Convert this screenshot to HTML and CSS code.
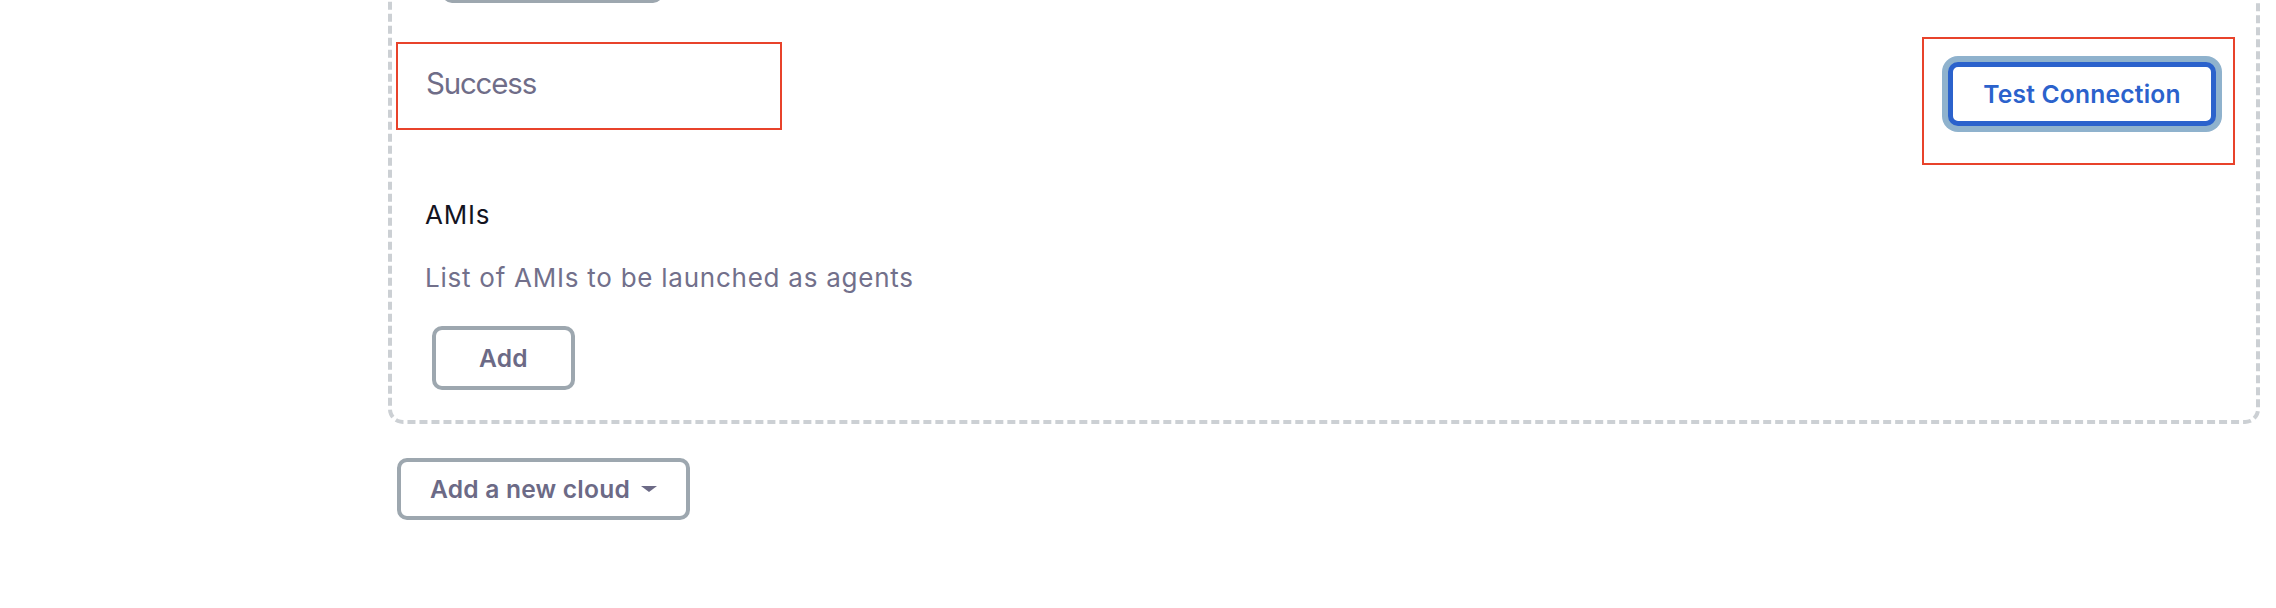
FILE: index.html
```html
<!DOCTYPE html>
<html lang="en">
<head>
<meta charset="utf-8">
<title>Clouds</title>
<link rel="stylesheet" href="styles.css">
</head>
<body>
<main class="page">
  <section class="cloud">
    <div class="prev-row"><button class="btn btn-prev" type="button" aria-label="Delete cloud"></button></div>
    <div class="validate-row">
      <div class="validation"><span class="validation-text">Success</span></div>
      <div class="validate-action"><button class="btn btn-focus" type="button">Test Connection</button></div>
    </div>
    <div class="field">
      <div class="label">AMIs</div>
      <div class="desc">List of AMIs to be launched as agents</div>
      <button class="btn btn-add" type="button">Add</button>
    </div>
  </section>
  <div class="actions">
    <button class="btn btn-menu" type="button">Add a new cloud <span class="caret"></span></button>
  </div>
</main>
</body>
</html>
```
FILE: styles.css
```css
html, body {
  margin: 0;
  padding: 0;
  background: #ffffff;
  overflow: hidden;
}
body {
  font-family: Inter, "Liberation Sans", sans-serif;
  font-size: 26px;
  letter-spacing: 0.75px;
  line-height: 36px;
  color: #14141f;
}
.page {
  width: 1872px;
  margin-left: 388px;
}
.cloud {
  box-sizing: border-box;
  width: 1872px;
  margin-top: -81px;
  border: 4px dashed #ccd0d4;
  border-radius: 15px;
  padding: 17px 21px 30px 4px;
}
.prev-row {
  display: flex;
  padding-left: 46px;
}
.btn {
  box-sizing: border-box;
  display: inline-flex;
  align-items: center;
  justify-content: center;
  height: 63px;
  padding: 0;
  background: #ffffff;
  border: 4px solid #9da7af;
  border-radius: 10px;
  font-family: Inter, "Liberation Sans", sans-serif;
  font-size: 24.6px;
  letter-spacing: 0.2px;
  font-weight: 600;
  white-space: nowrap;
  color: #6c6a86;
  cursor: pointer;
}
.btn-prev {
  width: 221px;
}
.validate-row {
  display: flex;
  justify-content: space-between;
  align-items: flex-start;
  margin-top: 34px;
}
.validation {
  box-sizing: border-box;
  width: 386px;
  height: 88px;
  margin-top: 5px;
  border: 2px solid #e8432b;
  display: flex;
  align-items: center;
  padding: 0 0 5px 28px;
}
.validation-text {
  font-size: 29.5px;
  letter-spacing: -1.2px;
  line-height: 1;
  color: #6f6d88;
}
.validate-action {
  box-sizing: border-box;
  width: 313px;
  height: 128px;
  border: 2px solid #e8432b;
  padding: 23px 17px 0 24px;
}
.btn-focus {
  width: 268px;
  height: 64px;
  border: 5px solid #2b62cc;
  color: #2b62cc;
  box-shadow: 0 0 0 6px #8fb2cd;
}
.field {
  padding-left: 29px;
  margin-top: 32px;
}
.label {
  font-weight: 400;
  color: #14141f;
}
.desc {
  margin-top: 27px;
  color: #72708b;
}
.btn-add {
  margin-top: 30px;
  margin-left: 7px;
  width: 143px;
  height: 64px;
}
.actions {
  padding-left: 9px;
  margin-top: 34px;
}
.btn-menu {
  width: 293px;
  height: 62px;
  gap: 11px;
}
.caret {
  width: 0;
  height: 0;
  border-left: 8px solid transparent;
  border-right: 8px solid transparent;
  border-top: 6px solid #6c6a86;
}
```
